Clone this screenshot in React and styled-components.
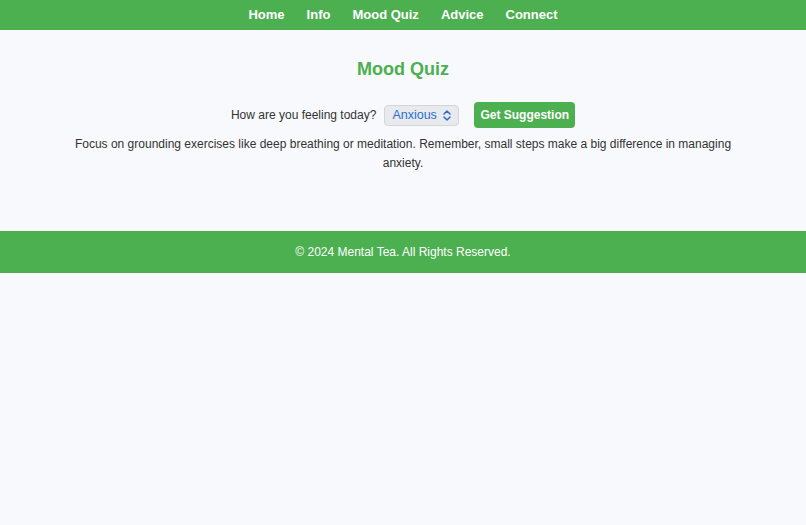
import React, { useState } from 'react';
import styled, { createGlobalStyle } from 'styled-components';

const GlobalStyle = createGlobalStyle`
  body {
    margin: 0;
    background: #f8f9fc;
    font-family: "Liberation Sans", Arial, sans-serif;
    color: #333;
  }
`;

const green = '#4caf50';

const Nav = styled.nav`
  background: ${green};
  height: 30px;
  box-sizing: border-box;
  padding-bottom: 2px;
  display: flex;
  justify-content: center;
  align-items: center;
  gap: 22px;
`;

const NavLink = styled.a`
  color: #fff;
  font-weight: bold;
  font-size: 13px;
  text-decoration: none;
  cursor: pointer;
`;

const Main = styled.main`
  padding: 28px 20px 58px;
  text-align: center;
`;

const Title = styled.h2`
  margin: 0 0 22px;
  color: ${green};
  font-size: 18px;
  line-height: 22px;
`;

const QuizRow = styled.div`
  display: flex;
  justify-content: center;
  align-items: center;
  font-size: 12px;
`;

const Label = styled.label`
  margin-right: 8px;
`;

const SelectWrap = styled.div`
  position: relative;
  margin-right: 15px;
`;

const Select = styled.select`
  appearance: none;
  width: 75px;
  height: 21px;
  padding: 0 20px 0 7px;
  border: 1px solid #d3d5da;
  border-radius: 4px;
  background: #e9eaee;
  color: #2a6fd0;
  font-family: "Liberation Sans", Arial, sans-serif;
  font-size: 12.5px;
`;

const Chevron = styled.svg`
  position: absolute;
  right: 8px;
  top: 5px;
  pointer-events: none;
`;

const Button = styled.button`
  background: ${green};
  color: #fff;
  border: none;
  border-radius: 4px;
  height: 26px;
  padding: 0 6px;
  font-family: "Liberation Sans", Arial, sans-serif;
  font-weight: bold;
  font-size: 12px;
  cursor: pointer;
`;

const Suggestion = styled.p`
  max-width: 680px;
  margin: 7px auto 0;
  font-size: 12px;
  line-height: 19px;
`;

const Footer = styled.footer`
  background: ${green};
  color: #fff;
  height: 42px;
  display: flex;
  justify-content: center;
  align-items: center;
  font-size: 12px;
`;

const advice = {
  Happy: 'Keep doing what makes you happy! Share your joy with the people around you.',
  Sad: 'It is okay to feel sad. Reach out to a friend or someone you trust and talk about it.',
  Anxious:
    'Focus on grounding exercises like deep breathing or meditation. Remember, small steps make a big difference in managing anxiety.',
  Stressed: 'Take short breaks, stretch, and try to prioritise one task at a time.',
};

export default function App() {
  const [mood, setMood] = useState('Anxious');
  const [text, setText] = useState(advice.Anxious);

  return (
    <>
      <GlobalStyle />
      <Nav>
        {['Home', 'Info', 'Mood Quiz', 'Advice', 'Connect'].map((l) => (
          <NavLink key={l}>{l}</NavLink>
        ))}
      </Nav>
      <Main>
        <Title>Mood Quiz</Title>
        <QuizRow>
          <Label htmlFor="mood">How are you feeling today?</Label>
          <SelectWrap>
            <Select id="mood" value={mood} onChange={(e) => setMood(e.target.value)}>
              {Object.keys(advice).map((m) => (
                <option key={m}>{m}</option>
              ))}
            </Select>
            <Chevron width="8" height="11" viewBox="0 0 8 11">
              <path d="M1 4 L4 1 L7 4 M1 7 L4 10 L7 7" fill="none" stroke="#2a6fd0" strokeWidth="1.5" strokeLinecap="round" strokeLinejoin="round" />
            </Chevron>
          </SelectWrap>
          <Button onClick={() => setText(advice[mood])}>Get Suggestion</Button>
        </QuizRow>
        <Suggestion>{text}</Suggestion>
      </Main>
      <Footer>© 2024 Mental Tea. All Rights Reserved.</Footer>
    </>
  );
}
